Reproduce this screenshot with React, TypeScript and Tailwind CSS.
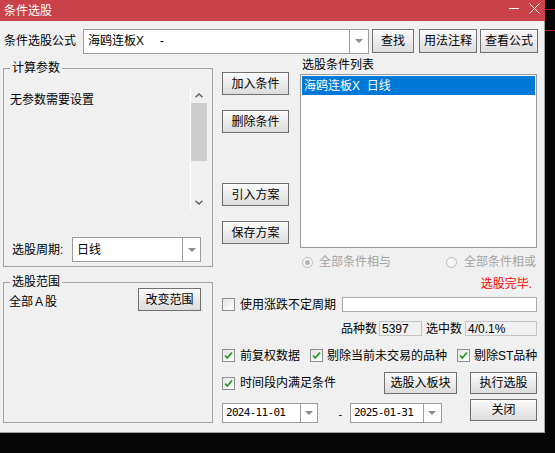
import React from 'react';

// classic win32-style push button
const Btn: React.FC<{ label: string; className?: string }> = ({ label, className = '' }) => (
  <div
    className={`flex items-center justify-center border border-[#707070] bg-gradient-to-b from-[#fbfbfb] to-[#dcdcdc] shadow-[inset_0_1px_0_#ffffff] text-[12px] leading-[16px] text-black whitespace-nowrap ${className}`}
  >
    {label}
  </div>
);

const Arrow = () => (
  <div className="w-0 h-0 border-l-[4px] border-r-[4px] border-t-[4px] border-l-transparent border-r-transparent border-t-[#8a8a8a]" />
);

// editable combo box with drop button on the right
const Combo: React.FC<{ className?: string; dropW: string; children: React.ReactNode }> = ({ className = '', dropW, children }) => (
  <div className={`flex shrink-0 border border-[#9c9c9c] bg-white ${className}`}>
    <div className="flex-1 flex items-center overflow-hidden whitespace-nowrap">{children}</div>
    <div className={`flex items-center justify-center border-l border-[#9c9c9c] ${dropW}`}>
      <Arrow />
    </div>
  </div>
);

const Check: React.FC<{ checked?: boolean }> = ({ checked }) => (
  <div className="flex items-center justify-center w-[13px] h-[13px] shrink-0 border border-[#8e8f8f] bg-gradient-to-br from-[#e4e4e4] to-[#ffffff]">
    {checked && (
      <svg width="11" height="11" viewBox="0 0 11 11">
        <path d="M2 5.5 L4.3 8 L9 2.5" fill="none" stroke="#1f9a1f" strokeWidth="1.8" />
      </svg>
    )}
  </div>
);

const Radio: React.FC<{ checked?: boolean; className?: string }> = ({ checked, className = '' }) => (
  <div className={`flex items-center justify-center w-[11px] h-[11px] shrink-0 rounded-full border border-[#bcbcbc] bg-[#f6f6f6] ${className}`}>
    {checked && <div className="w-[5px] h-[5px] rounded-full bg-[#b4b4b4]" />}
  </div>
);

const Chevron: React.FC<{ down?: boolean }> = ({ down }) => (
  <svg width="8" height="5" viewBox="0 0 8 5" className="block">
    <path d={down ? 'M0.5 0.8 L4 4 L7.5 0.8' : 'M0.5 4.2 L4 1 L7.5 4.2'} fill="none" stroke="#606060" strokeWidth="1.4" />
  </svg>
);

export default function App() {
  return (
    <div className="flex w-[555px] h-[453px] bg-[#050505] font-['Liberation_Sans','Noto_Sans_CJK_SC',sans-serif] text-[12px] leading-[16px] text-black">
      <div className="flex flex-col w-[545px] h-[433px] shrink-0">
        {/* title bar */}
        <div className="flex items-center h-[21px] bg-[#c9424a] pl-[4px] pr-[5px] text-white">
          <span>条件选股</span>
          <div className="ml-auto self-start mt-[3px] flex items-start gap-[10px]">
            <svg width="10" height="11" viewBox="0 0 10 11">
              <path d="M0 5.5 H10" stroke="#ffffff" strokeWidth="1" />
            </svg>
            <svg width="11" height="11" viewBox="0 0 11 11">
              <path d="M0.5 0.5 L10.5 10.5 M10.5 0.5 L0.5 10.5" stroke="#ffffff" strokeWidth="1" />
            </svg>
          </div>
        </div>

        <div className="flex-1 flex flex-col bg-[#f0f0f0] border-r border-b border-[#a3a3a3] whitespace-nowrap">
          {/* formula row */}
          <div className="flex items-center mt-[8px] h-[24px] pl-[4px]">
            <span className="w-[72px]">条件选股公式</span>
            <Combo className="ml-[7px] w-[286px] h-[25px]" dropW="w-[19px]">
              <span className="pl-[4px]">海鸥连板X</span>
              <span className="ml-[16px]">-</span>
            </Combo>
            <Btn label="查找" className="ml-[3px] w-[42px] h-[24px]" />
            <Btn label="用法注释" className="ml-[5px] w-[58px] h-[24px]" />
            <Btn label="查看公式" className="ml-[3px] w-[58px] h-[24px]" />
          </div>

          <div className="flex mt-[4px] pl-[3px]">
            {/* left column */}
            <div className="flex flex-col w-[210px]">
              <fieldset className="mt-[3px] h-[207px] border border-[#a3a3a3]">
                <legend className="ml-[6px] px-[2px]">计算参数</legend>
                <div className="flex flex-col">
                  <div className="flex mt-[11px] h-[123px] mr-[5px]">
                    <div className="flex-1 pl-[6px] pt-[5px]">无参数需要设置</div>
                    <div className="flex flex-col w-[17px] h-[123px] border-l border-white">
                      <div className="flex items-center justify-center h-[16px] shrink-0">
                        <Chevron />
                      </div>
                      <div className="h-[58px] shrink-0 bg-[#cdcdcd]" />
                      <div className="h-[33px] shrink-0" />
                      <div className="flex items-center justify-center h-[16px] shrink-0">
                        <Chevron down />
                      </div>
                    </div>
                  </div>
                  <div className="flex items-center mt-[27px] h-[25px] pl-[8px]">
                    <span className="w-[60px]">选股周期:</span>
                    <Combo className="w-[129px] h-[25px]" dropW="w-[18px]">
                      <span className="pl-[4px]">日线</span>
                    </Combo>
                  </div>
                </div>
              </fieldset>

              <fieldset className="mt-[7px] h-[149px] border border-[#a3a3a3]">
                <legend className="ml-[6px] px-[2px]">选股范围</legend>
                <div className="flex items-start -mt-[2px] h-[23px]">
                  <span className="pl-[5px] mt-[6px]">
                    全部<span className="mx-[2px]">A</span>股
                  </span>
                  <Btn label="改变范围" className="ml-auto mr-[11px] w-[63px] h-[23px]" />
                </div>
              </fieldset>
            </div>

            {/* right column */}
            <div className="flex flex-col ml-[9px] w-[315px]">
              <div className="flex">
                <div className="flex flex-col w-[67px]">
                  <Btn label="加入条件" className="mt-[15px] h-[23px]" />
                  <Btn label="删除条件" className="mt-[15px] h-[23px]" />
                  <Btn label="引入方案" className="mt-[50px] h-[23px]" />
                  <Btn label="保存方案" className="mt-[15px] h-[23px]" />
                </div>
                <div className="flex flex-col ml-[11px] w-[237px]">
                  <span className="h-[16px] pl-[2px]">选股条件列表</span>
                  <div className="mt-[1px] h-[174px] border border-[#9a9a9a] bg-white p-[1px]">
                    <div className="h-[19px] flex items-center bg-[#0078d7] text-white pl-[2px] whitespace-pre">海鸥连板X  日线</div>
                  </div>
                  <div className="flex items-center mt-[6px] h-[16px] pl-[2px] pr-[1px] text-[#a3a3a3]">
                    <Radio checked />
                    <span className="ml-[6px]">全部条件相与</span>
                    <Radio className="ml-auto" />
                    <span className="ml-[7px]">全部条件相或</span>
                  </div>
                </div>
              </div>

              <div className="mt-[6px] h-[16px] text-right pr-[5px] text-[#ff0000]">选股完毕.</div>

              <div className="flex items-center mt-[5px] h-[15px]">
                <Check />
                <span className="ml-[5px]">使用涨跌不定周期</span>
                <div className="ml-auto w-[195px] h-[15px] border border-[#ababab] bg-white" />
              </div>

              <div className="flex items-center justify-end mt-[9px] h-[15px]">
                <span>品种数</span>
                <div className="ml-[2px] w-[43px] h-[15px] flex items-center pl-[2px] border border-[#c4c4c4] bg-[#f0f0f0]">5397</div>
                <span className="ml-[4px]">选中数</span>
                <div className="ml-[3px] w-[72px] h-[15px] flex items-center pl-[2px] border border-[#c4c4c4] bg-[#f0f0f0]">4/0.1%</div>
              </div>

              <div className="flex items-center mt-[13px] h-[13px]">
                <Check checked />
                <span className="ml-[5px]">前复权数据</span>
                <div className="ml-[10px]"><Check checked /></div>
                <span className="ml-[4px]">剔除当前未交易的品种</span>
                <div className="ml-[10px]"><Check checked /></div>
                <span className="ml-[4px]">剔除ST品种</span>
              </div>

              <div className="flex items-center mt-[10px] h-[22px]">
                <Check checked />
                <span className="ml-[5px]">时间段内满足条件</span>
                <Btn label="选股入板块" className="ml-auto w-[73px] h-[22px]" />
                <Btn label="执行选股" className="ml-[13px] w-[67px] h-[22px]" />
              </div>

              <div className="flex items-start mt-[5px] h-[22px]">
                <div className="flex items-start font-['DejaVu_Sans_Mono',monospace] text-[11px] tracking-[-0.7px]">
                  <Combo className="mt-[4px] w-[96px] h-[20px]" dropW="w-[17px]">
                    <span className="pl-[3px]">2024-11-01</span>
                  </Combo>
                  <span className="ml-[19px] mt-[8px]">-</span>
                  <Combo className="ml-[7px] mt-[4px] w-[92px] h-[20px]" dropW="w-[18px]">
                    <span className="pl-[3px]">2025-01-31</span>
                  </Combo>
                </div>
                <Btn label="关闭" className="ml-auto w-[67px] h-[22px]" />
              </div>
            </div>
          </div>
        </div>
      </div>

      {/* strip of the window behind */}
      <div className="flex-1 flex flex-col">
        <div className="mt-[9px] h-px bg-[#b01818]" />
        <div className="mt-[20px] h-px bg-[#b01818]" />
      </div>
    </div>
  );
}
